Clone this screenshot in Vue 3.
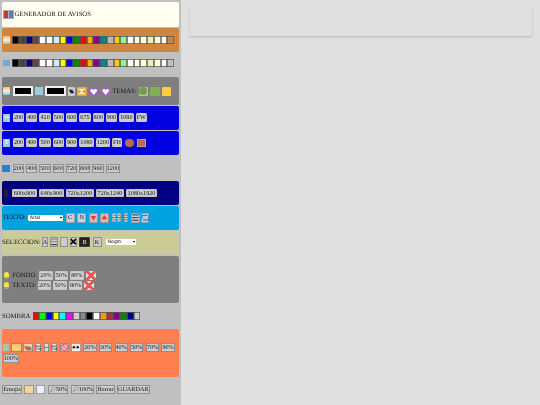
<script setup>
const base = ['#000','#444','#008','#644','#fff','#fff','#cee','#ff0','#00f','#080','#f00','#fa0','#808','#088','#bbb','#fc0','#9e9','#fff','#ffd','#ffd','#eea','#ffd','#ffe']
const sw1 = [...base, '#cd853f']
const sw2 = [...base, '#c0c0c0']
const w1 = ['200','400','420','500','600','675','800','900','1080','FW']
const w2 = ['200','400','500','600','900','1080','1200','FH']
const w3 = ['200','400','500','600','720','800','960','1200']
const sizes = ['600x900','640x900','720x1200','720x1240','1080x1920']
const shadow = ['#f00','#0f0','#00f','#ff0','#0ff','#f0f','#ccc','#888','#000','#fff','#f90','#a33','#808','#080','#008','#ccc']
const pct = ['20%','50%','80%']
const zoomP = ['20%','30%','40%','50%','70%','90%','100%']
</script>

<template>
  <div class="page">
    <aside class="side">
      <div class="panel head">
        <span class="hicon"><i class="hr"></i><i class="hb"></i></span>
        <span>GENERADOR DE AVISOS</span>
      </div>

      <div class="panel orange row">
        <span class="sun"></span>
        <div class="swatches"><i v-for="(c,i) in sw1" :key="i" :style="{background:c}"></i></div>
      </div>

      <div class="plain row sw2row">
        <span class="ab"></span>
        <div class="swatches"><i v-for="(c,i) in sw2" :key="i" :style="{background:c}"></i></div>
      </div>

      <div class="panel gray row g3">
        <span class="sun"></span>
        <span class="colorbox"></span>
        <span class="grid4"></span>
        <span class="colorbox"></span>
        <span class="tile moon"><svg viewBox="0 0 8 8"><path d="M1 2h4l2 4H3z" fill="#222"/></svg></span>
        <span class="tile shuffle">
          <svg viewBox="0 0 8 8"><path d="M1 2h2l2 4h2M1 6h2l2-4h2" stroke="#fff" fill="none"/></svg>
        </span>
        <span class="tile heart"><svg viewBox="0 0 8 8"><path d="M4 7L1 3.6C.4 2 2.6 .8 4 2.6 5.4 .8 7.6 2 7 3.6z" fill="#fff"/></svg></span>
        <span class="tile heart"><svg viewBox="0 0 8 8"><path d="M4 7L1 3.6C.4 2 2.6 .8 4 2.6 5.4 .8 7.6 2 7 3.6z" fill="#fff"/></svg></span>
        <span class="lbl temas">TEMAS:</span>
        <span class="tile round"></span>
        <span class="tile leaf"></span>
        <span class="tile gold"></span>
      </div>

      <div class="panel blue row">
        <span class="arrow">⇔</span>
        <button v-for="t in w1" :key="t" class="btn soft">{{ t }}</button>
      </div>

      <div class="panel blue row">
        <span class="arrow">⇕</span>
        <button v-for="t in w2" :key="t" class="btn soft">{{ t }}</button>
        <span class="chip circ"></span>
        <span class="chip sq"></span>
      </div>

      <div class="plain row w3">
        <span class="bluesq"></span>
        <button v-for="t in w3" :key="t" class="btn">{{ t }}</button>
      </div>

      <div class="panel navy row">
        <span class="phone"></span>
        <button v-for="t in sizes" :key="t" class="btn flat">{{ t }}</button>
      </div>

      <div class="panel cyan row">
        <span class="lbl">TEXTO:</span>
        <select class="sel"><option>Arial</option></select>
        <button class="btn tb">C</button>
        <button class="btn tb n">N</button>
        <button class="btn tb red"><svg viewBox="0 0 8 8"><path d="M1.5 2.5h5L4 6.5z" fill="#e33"/></svg></button>
        <button class="btn tb red"><svg viewBox="0 0 8 8"><path d="M1.5 5.5h5L4 1.5z" fill="#e33"/></svg></button>
        <button class="btn thin"><svg viewBox="0 0 4 8"><path d="M0 4h4M1 2h2M1 6h2" stroke="#666" stroke-width=".8"/></svg></button>
        <button class="btn thin"><svg viewBox="0 0 4 8"><path d="M0 4h4M1 2h2M1 6h2" stroke="#666" stroke-width=".8"/></svg></button>
        <button class="btn thin g"><svg viewBox="0 0 4 8"><path d="M0 4h4M0 2h4M0 6h4" stroke="#666" stroke-width=".8"/></svg></button>
        <button class="btn tb box"><svg viewBox="0 0 8 8"><path d="M1 1.5h6M1 6.5h6M1 4h6" stroke="#555" stroke-width="1"/></svg></button>
        <button class="btn tb loop"><svg viewBox="0 0 8 8"><path d="M1 5V2h5M7 3v3H2" stroke="#28c" fill="none"/></svg></button>
      </div>

      <div class="panel khaki row">
        <span class="lbl sel-lbl">SELECCION:</span>
        <button class="btn sb a">A</button>
        <button class="btn sb b2"><svg viewBox="0 0 8 8"><path d="M1 1.5h6M1 4h6" stroke="#888"/><path d="M1 7h6" stroke="#333"/></svg></button>
        <button class="btn sb b2"></button>
        <button class="btn sb a"><svg viewBox="0 0 8 8"><path d="M1 1l6 6M7 1L1 7" stroke="#000" stroke-width="1.8"/></svg></button>
        <button class="btn sb dark">B</button>
        <button class="btn sb k">K</button>
        <select class="sel neg"><option>Negro</option></select>
      </div>

      <div class="panel gray big">
        <div class="row fr">
          <span class="bulb"></span><span class="lbl">FONDO:</span>
          <button v-for="t in pct" :key="t" class="btn flat pc">{{ t }}</button>
          <span class="xx"></span>
        </div>
        <div class="row fr">
          <span class="bulb"></span><span class="lbl">TEXTO:</span>
          <button v-for="t in pct" :key="t" class="btn flat pc">{{ t }}</button>
          <span class="xx"></span>
        </div>
      </div>

      <div class="plain row shadow">
        <span class="lbl">SOMBRA</span>
        <div class="swatches sh"><i v-for="(c,i) in shadow" :key="i" :style="{background:c}"></i></div>
      </div>

      <div class="panel coral row">
        <span class="mini-pic"></span>
        <button class="btn ic folder"><svg viewBox="0 0 10 8"><path d="M1 2h3l1 1h4L8 7H1z" fill="#f6d272"/></svg></button>
        <button class="btn ic hand"><svg viewBox="0 0 9 8"><path d="M1 3h4l3 1v3H4L2 5z" fill="#a9745a"/></svg></button>
        <button class="btn ic s"><svg viewBox="0 0 6 8"><path d="M.5 3h5M.5 5.5h5M1.5 2L.5 3l1 1M4.5 4.5l1 1-1 1" stroke="#333" stroke-width=".6" fill="none"/></svg></button>
        <button class="btn ic s2"><svg viewBox="0 0 6 8"><path d="M.5 4h5" stroke="#333" stroke-width=".7"/></svg></button>
        <button class="btn ic s"><svg viewBox="0 0 6 8"><path d="M.5 3h5M.5 5.5h5M1.5 2L.5 3l1 1M4.5 4.5l1 1-1 1" stroke="#333" stroke-width=".6" fill="none"/></svg></button>
        <button class="btn ic no"><svg viewBox="0 0 8 8"><circle cx="4" cy="4" r="3" fill="none" stroke="#d55" stroke-width=".9"/><path d="M2 2l4 4" stroke="#d55" stroke-width=".9"/></svg></button>
        <button class="btn ic eyes"><svg viewBox="0 0 9 8"><circle cx="2.7" cy="4" r="1.2" fill="#222"/><circle cx="6.3" cy="4" r="1.2" fill="#222"/></svg></button>
        <button v-for="t in zoomP" :key="t" class="btn pc">{{ t }}</button>
      </div>

      <div class="plain row bottom">
        <button class="btn">Emojis</button>
        <button class="btn ic page1"></button>
        <button class="btn ic page2"></button>
        <button class="btn lens"><svg viewBox="0 0 8 8"><circle cx="5" cy="3" r="2" fill="#cde" stroke="#68a" stroke-width=".8"/><path d="M3.5 4.5L1 7" stroke="#678" stroke-width="1"/></svg>50%</button>
        <button class="btn lens"><svg viewBox="0 0 8 8"><circle cx="5" cy="3" r="2" fill="#cde" stroke="#68a" stroke-width=".8"/><path d="M3.5 4.5L1 7" stroke="#678" stroke-width="1"/></svg>100%</button>
        <button class="btn">Borrar</button>
        <button class="btn">GUARDAR</button>
      </div>
    </aside>

    <main class="main">
      <div class="card"></div>
    </main>
  </div>
</template>

<style>
html, body { margin: 0; padding: 0; background: #c8c8c8; }
</style>

<style scoped>
.page {
  display: flex;
  width: 540px;
  height: 405px;
  overflow: hidden;
  background: #e0e0e0;
  font-family: "Liberation Serif", serif;
  font-size: 6.7px;
  color: #111;
  text-rendering: geometricPrecision;
  filter: blur(.3px);
}
.side {
  width: 181px;
  flex: none;
  height: 405px;
  background: #c0c0c0;
  display: flex;
  flex-direction: column;
  padding: 2px 1.7px 0 2px;
  box-sizing: border-box;
}
.main { flex: 1; padding: 8.3px 8.3px 0 9px; }
.card {
  height: 27.4px;
  background: #e0e0e0;
  box-shadow: 0 1px 2px rgba(0,0,0,.18);
}
.panel { border-radius: 2px; box-sizing: border-box; }
.row { display: flex; align-items: center; }
.head {
  height: 24.7px;
  background: #fffff2;
  display: flex;
  align-items: center;
  margin-bottom: 1px;
}
.hicon {
  width: 11.5px; height: 9px; display: flex; flex: none; padding: 1px;
  background: #bbb; box-shadow: inset 0 0 0 .5px #999; box-sizing: border-box; margin: 0 .5px 0 .5px; gap: .5px;
}
.hr { flex: 1; background: #c33; }
.hb { flex: 1; background: #5a7fb0; }
.orange { height: 24px; background: #cd853f; padding-left: .7px; }
.sun {
  width: 7.5px; height: 8px; flex: none;
  background: linear-gradient(#fb6, #fed 50%, #7cd);
  border-radius: 1px;
}
.swatches { display: flex; margin-left: 2.3px; }
.swatches i {
  width: 6.74px; height: 8.3px; display: block;
  box-shadow: inset 0 0 0 .7px #555; box-sizing: border-box;
}
.sw2row { height: 23px; margin-bottom: 2.6px; padding-left: .7px; }
.ab { width: 7.5px; height: 6px; background: #7aa8cc; flex: none; }
.g3 { height: 27.7px; background: #7f7f7f; margin-bottom: .7px; padding-left: .7px; gap: 2.3px; }
.g3 .sun { margin-right: .2px; }
.colorbox {
  width: 20.5px; height: 10px; background: #000; border: 2px solid #eee;
  box-sizing: border-box; flex: none;
}
.grid4 { width: 7.5px; height: 7.5px; background: #9cd; flex: none; }
.tile {
  width: 9.4px; height: 9px; flex: none; border-radius: 1px;
  display: flex; align-items: center; justify-content: center;
}
.tile svg { width: 100%; height: 100%; display: block; }
.moon { background: #ccc; width: 7px; }
.shuffle { background: #e9a53a; }
.heart { background: #a060c0; }
.lbl { white-space: nowrap; }
.temas { margin: 0 -.3px; }
.round { background: #bbb; }
.round::after { content: ""; width: 8px; height: 8px; border-radius: 50%; background: #6fa048; position: absolute; }
.leaf { background: #80b050; }
.gold { background: #fc4; }
.blue { height: 24.3px; background: #0000e0; margin-bottom: .7px; padding-left: .7px; gap: 2px; }
.blue .arrow { margin-right: .7px; }
.arrow {
  width: 7.5px; height: 7.5px; background: #9cd; color: #fff; flex: none; font-size: 6px;
  display: flex; align-items: center; justify-content: center; line-height: 1; font-family: "DejaVu Sans", sans-serif;
}
.btn {
  font-family: inherit;
  font-size: 6.2px;
  color: #111;
  height: 8.7px;
  line-height: 7px;
  padding: 0 1px;
  margin: 0;
  background: #ccc;
  border: 0;
  box-shadow: inset 0 0 0 .5px #555;
  border-radius: 1.5px;
  box-sizing: border-box;
  white-space: nowrap;
  display: inline-flex;
  align-items: center;
  justify-content: center;
  flex: none;
  text-rendering: geometricPrecision;
}
.btn svg { width: 100%; height: 100%; display: block; }
.soft { box-shadow: none; }
.chip { width: 8.5px; height: 8.5px; background: #bb6a4f; flex: none; }
.circ { border-radius: 50%; margin: 0 1px 0 1.5px; }
.sq { background: #c06a50; width: 9px; box-shadow: inset 0 0 0 .5px #ccc; box-sizing: border-box; }
.w3 { height: 25.7px; gap: 2px; }
.bluesq { width: 7.7px; height: 7.7px; background: #2a7fd0; flex: none; margin: 0 .7px 0 .3px; }
.navy { height: 23.6px; background: #000080; margin-bottom: 1.4px; gap: 2.6px; }
.navy .btn { padding: 0 1.35px; }
.phone { width: 4px; height: 8px; background: #222; flex: none; margin: 0 1.4px 0 2.3px; border-radius: 1px; }
.flat { box-shadow: inset 0 0 0 .5px #bbb; }
.cyan { height: 23.3px; background: #00a2e0; margin-bottom: 1px; padding-left: .3px; }
.sel {
  appearance: none;
  font-family: "Liberation Sans", sans-serif;
  font-size: 5px;
  height: 6.5px;
  line-height: 6.5px;
  width: 35px;
  padding: 0 0 0 1.5px;
  border: 0;
  margin: 0 2.4px;
  flex: none;
  border-radius: 1px;
  color: #111;
  text-rendering: geometricPrecision;
  background-color: #fff;
  background-image: linear-gradient(45deg, transparent 50%, #222 50%), linear-gradient(-45deg, transparent 50%, #222 50%);
  background-size: 1.5px 1.5px, 1.5px 1.5px;
  background-position: calc(100% - 2px) 50%, calc(100% - .5px) 50%;
  background-repeat: no-repeat;
  box-sizing: border-box;
}
.neg { width: 30.3px; margin: 0 0 0 2.4px; }
.tb { width: 8.8px; height: 9.3px; background: #ccd; box-shadow: inset 0 0 0 .5px #777; margin-right: 2.6px; padding: 0; }
.n { width: 9px; }
.red { background: #d8b8b8; }
.thin { width: 4.5px; height: 9px; padding: 0; margin-right: .8px; background: #ddd; box-shadow: inset 0 0 0 .5px #888; }
.g { margin: 0 2.6px 0 1.8px; }
.box { margin-right: .9px; }
.loop { background: #bcd; }
.khaki { height: 23px; background: #cccc99; margin-bottom: 2px; }
.sel-lbl { margin-right: 1px; }
.sb { height: 9.3px; margin-right: 2px; padding: 0; }
.a { width: 6.7px; }
.b2 { width: 8px; }
.dark { width: 10.7px; background: #222; color: #eee; margin-right: 2.6px; margin-left: .3px; }
.k { width: 9px; }
.big { height: 47.7px; background: #7f7f7f; display: flex; flex-direction: column; justify-content: center; gap: 1.3px; padding-left: 2px; padding-top: 2px; }
.fr { gap: 2.1px; height: 9px; }
.bulb { width: 4.7px; height: 6.5px; background: linear-gradient(#fde14a 70%, #8ab 70%); border-radius: 50% 50% 40% 40%; margin-right: 1.5px; flex: none; }
.big .pc { background: #d0d0d0; min-width: 13.3px; }
.xx {
  width: 10px; height: 9px; flex: none;
  background: linear-gradient(45deg, transparent 40%, #e55 40%, #e55 60%, transparent 60%),
              linear-gradient(-45deg, transparent 40%, #e55 40%, #e55 60%, transparent 60%), #ddd;
}
.shadow { height: 25.6px; }
.sh { margin-left: 2.3px; }
.coral { height: 47.7px; background: #ff7f50; gap: 2.3px 2.3px; flex-wrap: wrap; align-content: center; padding-left: .7px; }
.mini-pic { width: 5.7px; height: 7px; background: #9cb; flex: none; margin-left: .6px; }
.ic { height: 8.7px; background: #e8c8a0; padding: 0; }
.folder { width: 11.3px; background: #f0c078; margin-left: -.3px; }
.hand { width: 9.4px; background: #ead0b0; margin-left: -1.3px; }
.s { width: 6.3px; background: #ddd; }
.s2 { width: 5.3px; background: #ddd; }
.no { width: 9.3px; background: #e8c0b8; }
.eyes { width: 9.6px; background: #eee; }
.bottom { height: 26px; gap: 2.3px; padding-left: .3px; }
.page1 { width: 9.4px; background: #f0d8a0; }
.page2 { width: 9.6px; background: #eef; }
.lens svg { width: 7px; height: 7px; margin-right: .2px; flex: none; }
</style>
